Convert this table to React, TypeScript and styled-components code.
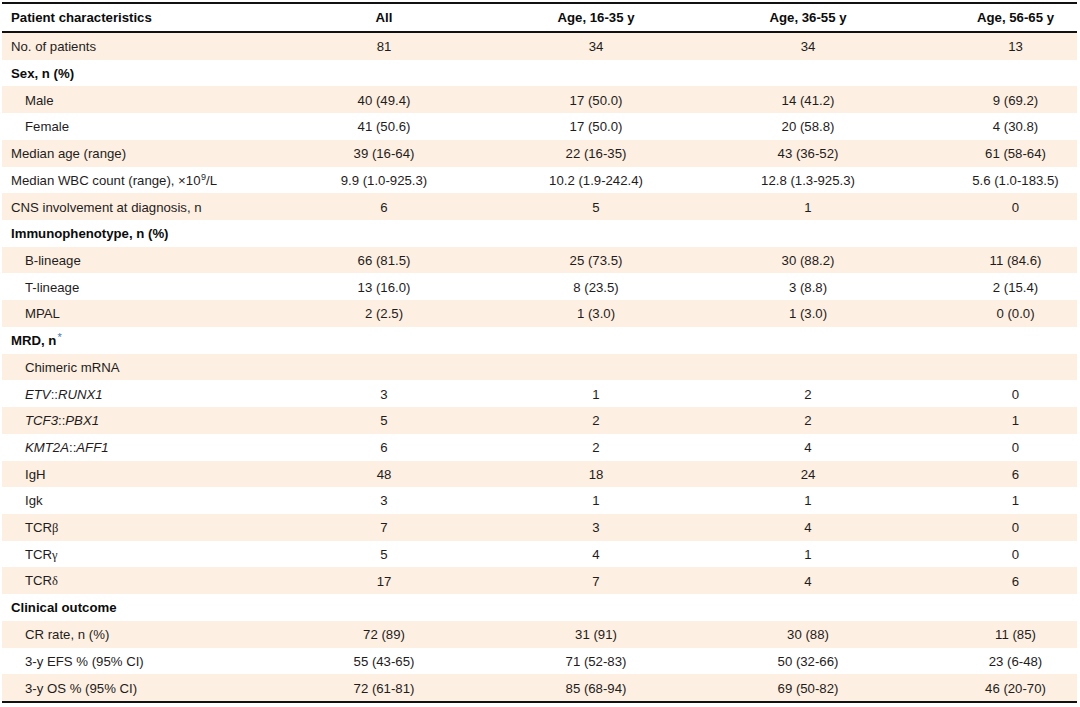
import styled, { createGlobalStyle } from "styled-components";
import React from "react";

const GlobalStyle = createGlobalStyle`
  html, body {
    margin: 0;
    padding: 0;
    background: #ffffff;
  }
  body {
    font-family: "Liberation Sans", Arial, sans-serif;
    color: #1f1c1d;
  }
`;

const Page = styled.div`
  padding: 2px 3px 0 2px;
`;

const Table = styled.div`
  border-top: 2.5px solid #111;
  border-bottom: 2.5px solid #111;
  font-size: 13.2px;
  line-height: 1;
`;

const gridCols = `
  display: grid;
  grid-template-columns: 276px 212px 212px 212px 1fr;
  align-items: center;
`;

const HeaderRow = styled.div`
  ${gridCols}
  height: 27px;
  border-bottom: 2px solid #111;
  color: #0c0c0c;
`;

const BodyRow = styled.div<{ $shaded: boolean }>`
  ${gridCols}
  height: 26.72px;
  padding-top: 1px;
  box-sizing: border-box;
  background: ${(p) => (p.$shaded ? "#fdefe1" : "#ffffff")};
`;

const LabelCell = styled.div<{ $bold?: boolean; $indent: boolean }>`
  padding-left: ${(p) => (p.$indent ? "23px" : "9px")};
  font-weight: ${(p) => (p.$bold ? 700 : 400)};
  color: ${(p) => (p.$bold ? "#0c0c0c" : "inherit")};
  white-space: nowrap;

  sup {
    font-size: 9px;
    vertical-align: 5px;
    line-height: 0;
    margin-left: 0.5px;
  }
`;

const ValueCell = styled.div<{ $bold?: boolean; $last: boolean }>`
  text-align: center;
  padding-left: ${(p) => (p.$last ? "40px" : "0")};
  font-weight: ${(p) => (p.$bold ? 700 : 400)};
  white-space: nowrap;
`;

const Greek = styled.span`
  font-family: "Liberation Serif", "DejaVu Serif", serif;
  font-size: 12.5px;
`;

const Star = styled.span`
  font-size: 11px;
  vertical-align: 4px;
  line-height: 0;
  font-weight: 400;
  margin-left: 1px;
  color: #4a78b0;
`;

type Row = {
  label: React.ReactNode;
  values?: string[];
  kind: "section" | "top" | "sub";
};

const rows: Row[] = [
  { label: "No. of patients", values: ["81", "34", "34", "13"], kind: "top" },
  { label: "Sex, n (%)", kind: "section" },
  { label: "Male", values: ["40 (49.4)", "17 (50.0)", "14 (41.2)", "9 (69.2)"], kind: "sub" },
  { label: "Female", values: ["41 (50.6)", "17 (50.0)", "20 (58.8)", "4 (30.8)"], kind: "sub" },
  { label: "Median age (range)", values: ["39 (16-64)", "22 (16-35)", "43 (36-52)", "61 (58-64)"], kind: "top" },
  {
    label: (
      <>
        Median WBC count (range), ×10<sup>9</sup>/L
      </>
    ),
    values: ["9.9 (1.0-925.3)", "10.2 (1.9-242.4)", "12.8 (1.3-925.3)", "5.6 (1.0-183.5)"],
    kind: "top",
  },
  { label: "CNS involvement at diagnosis, n", values: ["6", "5", "1", "0"], kind: "top" },
  { label: "Immunophenotype, n (%)", kind: "section" },
  { label: "B-lineage", values: ["66 (81.5)", "25 (73.5)", "30 (88.2)", "11 (84.6)"], kind: "sub" },
  { label: "T-lineage", values: ["13 (16.0)", "8 (23.5)", "3 (8.8)", "2 (15.4)"], kind: "sub" },
  { label: "MPAL", values: ["2 (2.5)", "1 (3.0)", "1 (3.0)", "0 (0.0)"], kind: "sub" },
  {
    label: (
      <>
        MRD, n<Star>*</Star>
      </>
    ),
    kind: "section",
  },
  { label: "Chimeric mRNA", kind: "sub" },
  {
    label: (
      <>
        <i>ETV</i>::<i>RUNX1</i>
      </>
    ),
    values: ["3", "1", "2", "0"],
    kind: "sub",
  },
  {
    label: (
      <>
        <i>TCF3</i>::<i>PBX1</i>
      </>
    ),
    values: ["5", "2", "2", "1"],
    kind: "sub",
  },
  {
    label: (
      <>
        <i>KMT2A</i>::<i>AFF1</i>
      </>
    ),
    values: ["6", "2", "4", "0"],
    kind: "sub",
  },
  { label: "IgH", values: ["48", "18", "24", "6"], kind: "sub" },
  { label: "Igk", values: ["3", "1", "1", "1"], kind: "sub" },
  { label: <>TCR<Greek>β</Greek></>, values: ["7", "3", "4", "0"], kind: "sub" },
  { label: <>TCR<Greek>γ</Greek></>, values: ["5", "4", "1", "0"], kind: "sub" },
  { label: <>TCR<Greek>δ</Greek></>, values: ["17", "7", "4", "6"], kind: "sub" },
  { label: "Clinical outcome", kind: "section" },
  { label: "CR rate, n (%)", values: ["72 (89)", "31 (91)", "30 (88)", "11 (85)"], kind: "sub" },
  { label: "3-y EFS % (95% CI)", values: ["55 (43-65)", "71 (52-83)", "50 (32-66)", "23 (6-48)"], kind: "sub" },
  { label: "3-y OS % (95% CI)", values: ["72 (61-81)", "85 (68-94)", "69 (50-82)", "46 (20-70)"], kind: "sub" },
];

const headers = ["All", "Age, 16-35 y", "Age, 36-55 y", "Age, 56-65 y"];

export default function App() {
  return (
    <>
      <GlobalStyle />
      <Page>
        <Table>
          <HeaderRow>
            <LabelCell $bold $indent={false}>
              Patient characteristics
            </LabelCell>
            {headers.map((h, i) => (
              <ValueCell key={h} $bold $last={i === headers.length - 1}>
                {h}
              </ValueCell>
            ))}
          </HeaderRow>
          {rows.map((row, idx) => (
            <BodyRow key={idx} $shaded={idx % 2 === 0}>
              <LabelCell $bold={row.kind === "section"} $indent={row.kind === "sub"}>
                {row.label}
              </LabelCell>
              {(row.values ?? ["", "", "", ""]).map((v, i) => (
                <ValueCell key={i} $last={i === 3}>
                  {v}
                </ValueCell>
              ))}
            </BodyRow>
          ))}
        </Table>
      </Page>
    </>
  );
}
